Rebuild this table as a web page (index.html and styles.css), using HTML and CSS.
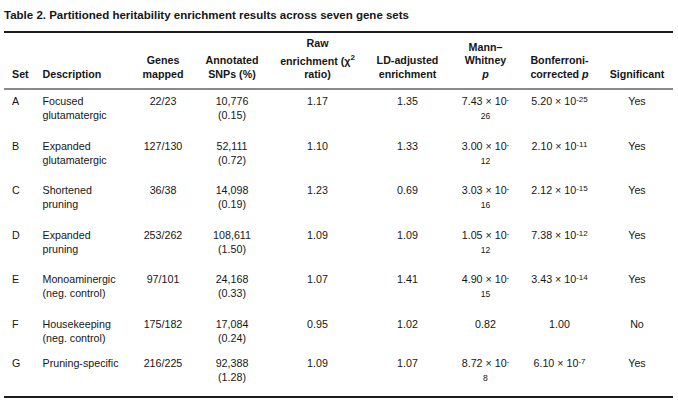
FILE: index.html
```html
<!DOCTYPE html>
<html lang="en">
<head>
<meta charset="utf-8">
<title>Table 2</title>
<link rel="stylesheet" href="styles.css">
</head>
<body>
<div class="page">
  <div class="caption">Table 2. Partitioned heritability enrichment results across seven gene sets</div>
  <table class="tbl">
    <colgroup>
      <col class="c-set"><col class="c-desc"><col class="c-genes"><col class="c-ann"><col class="c-raw"><col class="c-ld"><col class="c-mw"><col class="c-bonf"><col class="c-sig">
    </colgroup>
    <thead>
      <tr>
        <th class="l set">Set</th>
        <th class="l desc">Description</th>
        <th>Genes<br>mapped</th>
        <th>Annotated<br>SNPs (%)</th>
        <th>Raw<br>enrichment (χ<sup>2</sup><br>ratio)</th>
        <th>LD-adjusted<br>enrichment</th>
        <th>Mann–<br>Whitney<br><i>p</i></th>
        <th>Bonferroni-<br>corrected <i>p</i></th>
        <th>Significant</th>
      </tr>
    </thead>
    <tbody>
      <tr>
        <td class="l set">A</td>
        <td class="l desc">Focused glutamatergic</td>
        <td>22/23</td>
        <td>10,776<br>(0.15)</td>
        <td>1.17</td>
        <td>1.35</td>
        <td>7.43 × 10<sup>-</sup><span class="tail">26</span></td>
        <td>5.20 × 10<sup>-25</sup></td>
        <td>Yes</td>
      </tr>
      <tr>
        <td class="l set">B</td>
        <td class="l desc">Expanded glutamatergic</td>
        <td>127/130</td>
        <td>52,111<br>(0.72)</td>
        <td>1.10</td>
        <td>1.33</td>
        <td>3.00 × 10<sup>-</sup><span class="tail">12</span></td>
        <td>2.10 × 10<sup>-11</sup></td>
        <td>Yes</td>
      </tr>
      <tr>
        <td class="l set">C</td>
        <td class="l desc">Shortened pruning</td>
        <td>36/38</td>
        <td>14,098<br>(0.19)</td>
        <td>1.23</td>
        <td>0.69</td>
        <td>3.03 × 10<sup>-</sup><span class="tail">16</span></td>
        <td>2.12 × 10<sup>-15</sup></td>
        <td>Yes</td>
      </tr>
      <tr>
        <td class="l set">D</td>
        <td class="l desc">Expanded pruning</td>
        <td>253/262</td>
        <td>108,611<br>(1.50)</td>
        <td>1.09</td>
        <td>1.09</td>
        <td>1.05 × 10<sup>-</sup><span class="tail">12</span></td>
        <td>7.38 × 10<sup>-12</sup></td>
        <td>Yes</td>
      </tr>
      <tr>
        <td class="l set">E</td>
        <td class="l desc">Monoaminergic (neg. control)</td>
        <td>97/101</td>
        <td>24,168<br>(0.33)</td>
        <td>1.07</td>
        <td>1.41</td>
        <td>4.90 × 10<sup>-</sup><span class="tail">15</span></td>
        <td>3.43 × 10<sup>-14</sup></td>
        <td>Yes</td>
      </tr>
      <tr>
        <td class="l set">F</td>
        <td class="l desc">Housekeeping (neg. control)</td>
        <td>175/182</td>
        <td>17,084<br>(0.24)</td>
        <td>0.95</td>
        <td>1.02</td>
        <td>0.82</td>
        <td>1.00</td>
        <td>No</td>
      </tr>
      <tr>
        <td class="l set">G</td>
        <td class="l desc">Pruning-specific</td>
        <td>216/225</td>
        <td>92,388<br>(1.28)</td>
        <td>1.09</td>
        <td>1.07</td>
        <td>8.72 × 10<sup>-</sup><span class="tail">8</span></td>
        <td>6.10 × 10<sup>-7</sup></td>
        <td>Yes</td>
      </tr>
    </tbody>
  </table>
</div>
</body>
</html>
```

FILE: styles.css
```css
html, body {
  margin: 0;
  padding: 0;
  background: #ffffff;
}

.page {
  padding: 8px 5px 0 4px;
  font-family: "Liberation Sans", Arial, sans-serif;
  color: #161616;
}

.caption {
  font-size: 11.5px;
  font-weight: bold;
  line-height: 14px;
  margin: 0 0 9px 0;
  white-space: nowrap;
}

.tbl {
  width: 669px;
  table-layout: fixed;
  border-collapse: collapse;
  font-size: 10.7px;
  border-top: 2px solid #1e1e1e;
  border-bottom: 2px solid #1e1e1e;
}

.c-set { width: 32px; }
.c-desc { width: 99px; }
.c-genes { width: 56px; }
.c-ann { width: 82px; }
.c-raw { width: 89px; }
.c-ld { width: 91px; }
.c-mw { width: 65px; }
.c-bonf { width: 83px; }
.c-sig { width: 72px; }

.tbl th {
  font-weight: bold;
  line-height: 13.5px;
  vertical-align: bottom;
  text-align: center;
  padding: 4px 2px 7px;
  border-bottom: 2px solid #8a8a8a;
}

.tbl td {
  line-height: 14px;
  vertical-align: top;
  text-align: center;
  padding: 4px 2px 7px;
}

.tbl .l { text-align: left; }
.tbl .set { padding-left: 8px; }
.tbl .desc { padding-left: 6.5px; padding-right: 12px; }

.tbl th sup {
  font-size: 8px;
  vertical-align: super;
}

.tbl td sup {
  font-size: 8px;
  line-height: 0;
  vertical-align: 3px;
}

.tail {
  display: block;
  font-size: 8.6px;
  line-height: 14px;
  padding-top: 1px;
  padding-bottom: 4.5px;
}
```
